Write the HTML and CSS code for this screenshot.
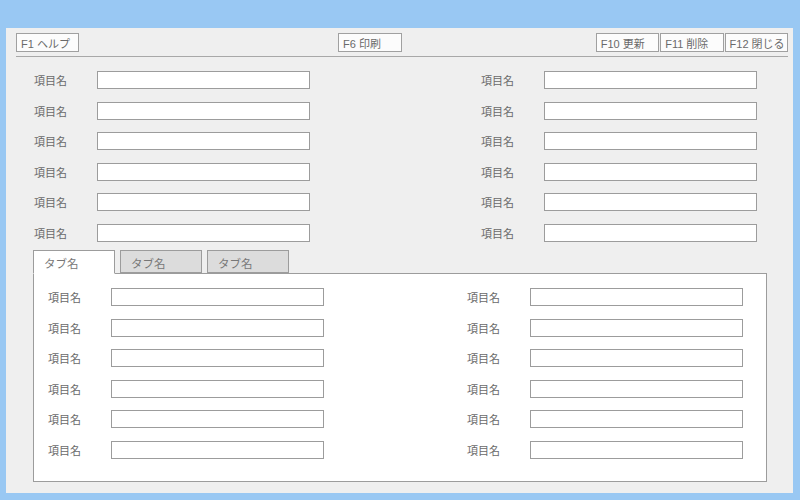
FILE: index.html
```html
<!DOCTYPE html>
<html lang="ja">
<head>
<meta charset="UTF-8">
<meta name="viewport" content="width=device-width, initial-scale=1.0">
<title>入力画面</title>
<link rel="stylesheet" href="styles.css">
</head>
<body>
<div class="screen">
  <div class="fkeys">
    <button class="fkey key-1">F1 ヘルプ</button>
    <button class="fkey key-6">F6 印刷</button>
    <button class="fkey key-10">F10 更新</button>
    <button class="fkey key-11">F11 削除</button>
    <button class="fkey key-12">F12 閉じる</button>
  </div>

  <div class="fields head-fields">
    <div class="field-col">
      <label class="field"><span>項目名</span><input type="text"></label>
      <label class="field"><span>項目名</span><input type="text"></label>
      <label class="field"><span>項目名</span><input type="text"></label>
      <label class="field"><span>項目名</span><input type="text"></label>
      <label class="field"><span>項目名</span><input type="text"></label>
      <label class="field"><span>項目名</span><input type="text"></label>
    </div>
    <div class="field-col">
      <label class="field"><span>項目名</span><input type="text"></label>
      <label class="field"><span>項目名</span><input type="text"></label>
      <label class="field"><span>項目名</span><input type="text"></label>
      <label class="field"><span>項目名</span><input type="text"></label>
      <label class="field"><span>項目名</span><input type="text"></label>
      <label class="field"><span>項目名</span><input type="text"></label>
    </div>
  </div>

  <div class="tabs">
    <div class="tab active">タブ名</div>
    <div class="tab">タブ名</div>
    <div class="tab">タブ名</div>
  </div>
  <div class="fields tab-body">
    <div class="field-col">
      <label class="field"><span>項目名</span><input type="text"></label>
      <label class="field"><span>項目名</span><input type="text"></label>
      <label class="field"><span>項目名</span><input type="text"></label>
      <label class="field"><span>項目名</span><input type="text"></label>
      <label class="field"><span>項目名</span><input type="text"></label>
      <label class="field"><span>項目名</span><input type="text"></label>
    </div>
    <div class="field-col">
      <label class="field"><span>項目名</span><input type="text"></label>
      <label class="field"><span>項目名</span><input type="text"></label>
      <label class="field"><span>項目名</span><input type="text"></label>
      <label class="field"><span>項目名</span><input type="text"></label>
      <label class="field"><span>項目名</span><input type="text"></label>
      <label class="field"><span>項目名</span><input type="text"></label>
    </div>
  </div>
</div>
</body>
</html>
```

FILE: styles.css
```css
body {
  margin: 0;
  background-color: #99c8f3;
  font-family: "Liberation Sans", "Noto Sans CJK JP", sans-serif;
  color: #6a6a6a;
}
.screen {
  margin: 28px 7px 7px 6px;
  height: 465px;
  box-sizing: border-box;
  background-color: #efefef;
}
.fkeys {
  display: grid;
  grid-template-columns: repeat(12, 1fr);
  column-gap: 1px;
  margin: 0 5px 0 10px;
  padding: 5px 0 4px;
  border-bottom: 1px solid #a8a8a8;
}
.fkey {
  height: 19px;
  padding: 0 4px;
  text-align: left;
  white-space: nowrap;
  overflow: hidden;
  background-color: #fcfcfc;
  border: 1px solid #a0a0a0;
  font-family: inherit;
  font-size: 11px;
  color: #6a6a6a;
}
.key-1 { grid-column: 1; }
.key-6 { grid-column: 6; }
.key-10 { grid-column: 10; }
.key-11 { grid-column: 11; }
.key-12 { grid-column: 12; }

.fields {
  display: flex;
  justify-content: space-between;
}
.head-fields {
  padding: 14px 36px 0 28px;
}
.field-col {
  display: flex;
  flex-direction: column;
  gap: 12.6px;
}
.field {
  display: flex;
  align-items: center;
  height: 18px;
  font-size: 11px;
}
.field span {
  width: 63px;
}
.field input {
  width: 213px;
  height: 18px;
  margin: 0;
  padding: 0 4px;
  box-sizing: border-box;
  border: 1px solid #9c9c9c;
  background-color: #fff;
}

.tabs {
  display: flex;
  gap: 5px;
  margin: 8px 0 0 27px;
  position: relative;
  z-index: 1;
}
.tab {
  width: 82px;
  height: 23px;
  box-sizing: border-box;
  padding: 4px 0 0 10px;
  border: 1px solid #9c9c9c;
  background-color: #dcdcdc;
  font-size: 11.5px;
  color: #777;
}
.tab.active {
  background-color: #fff;
  border-bottom-color: #fff;
  margin-bottom: -1px;
  height: 24px;
}
.tab-body {
  margin: 0 26px 0 27px;
  padding: 14px 23px 22px 14px;
  background-color: #fff;
  border: 1px solid #9c9c9c;
}
```
